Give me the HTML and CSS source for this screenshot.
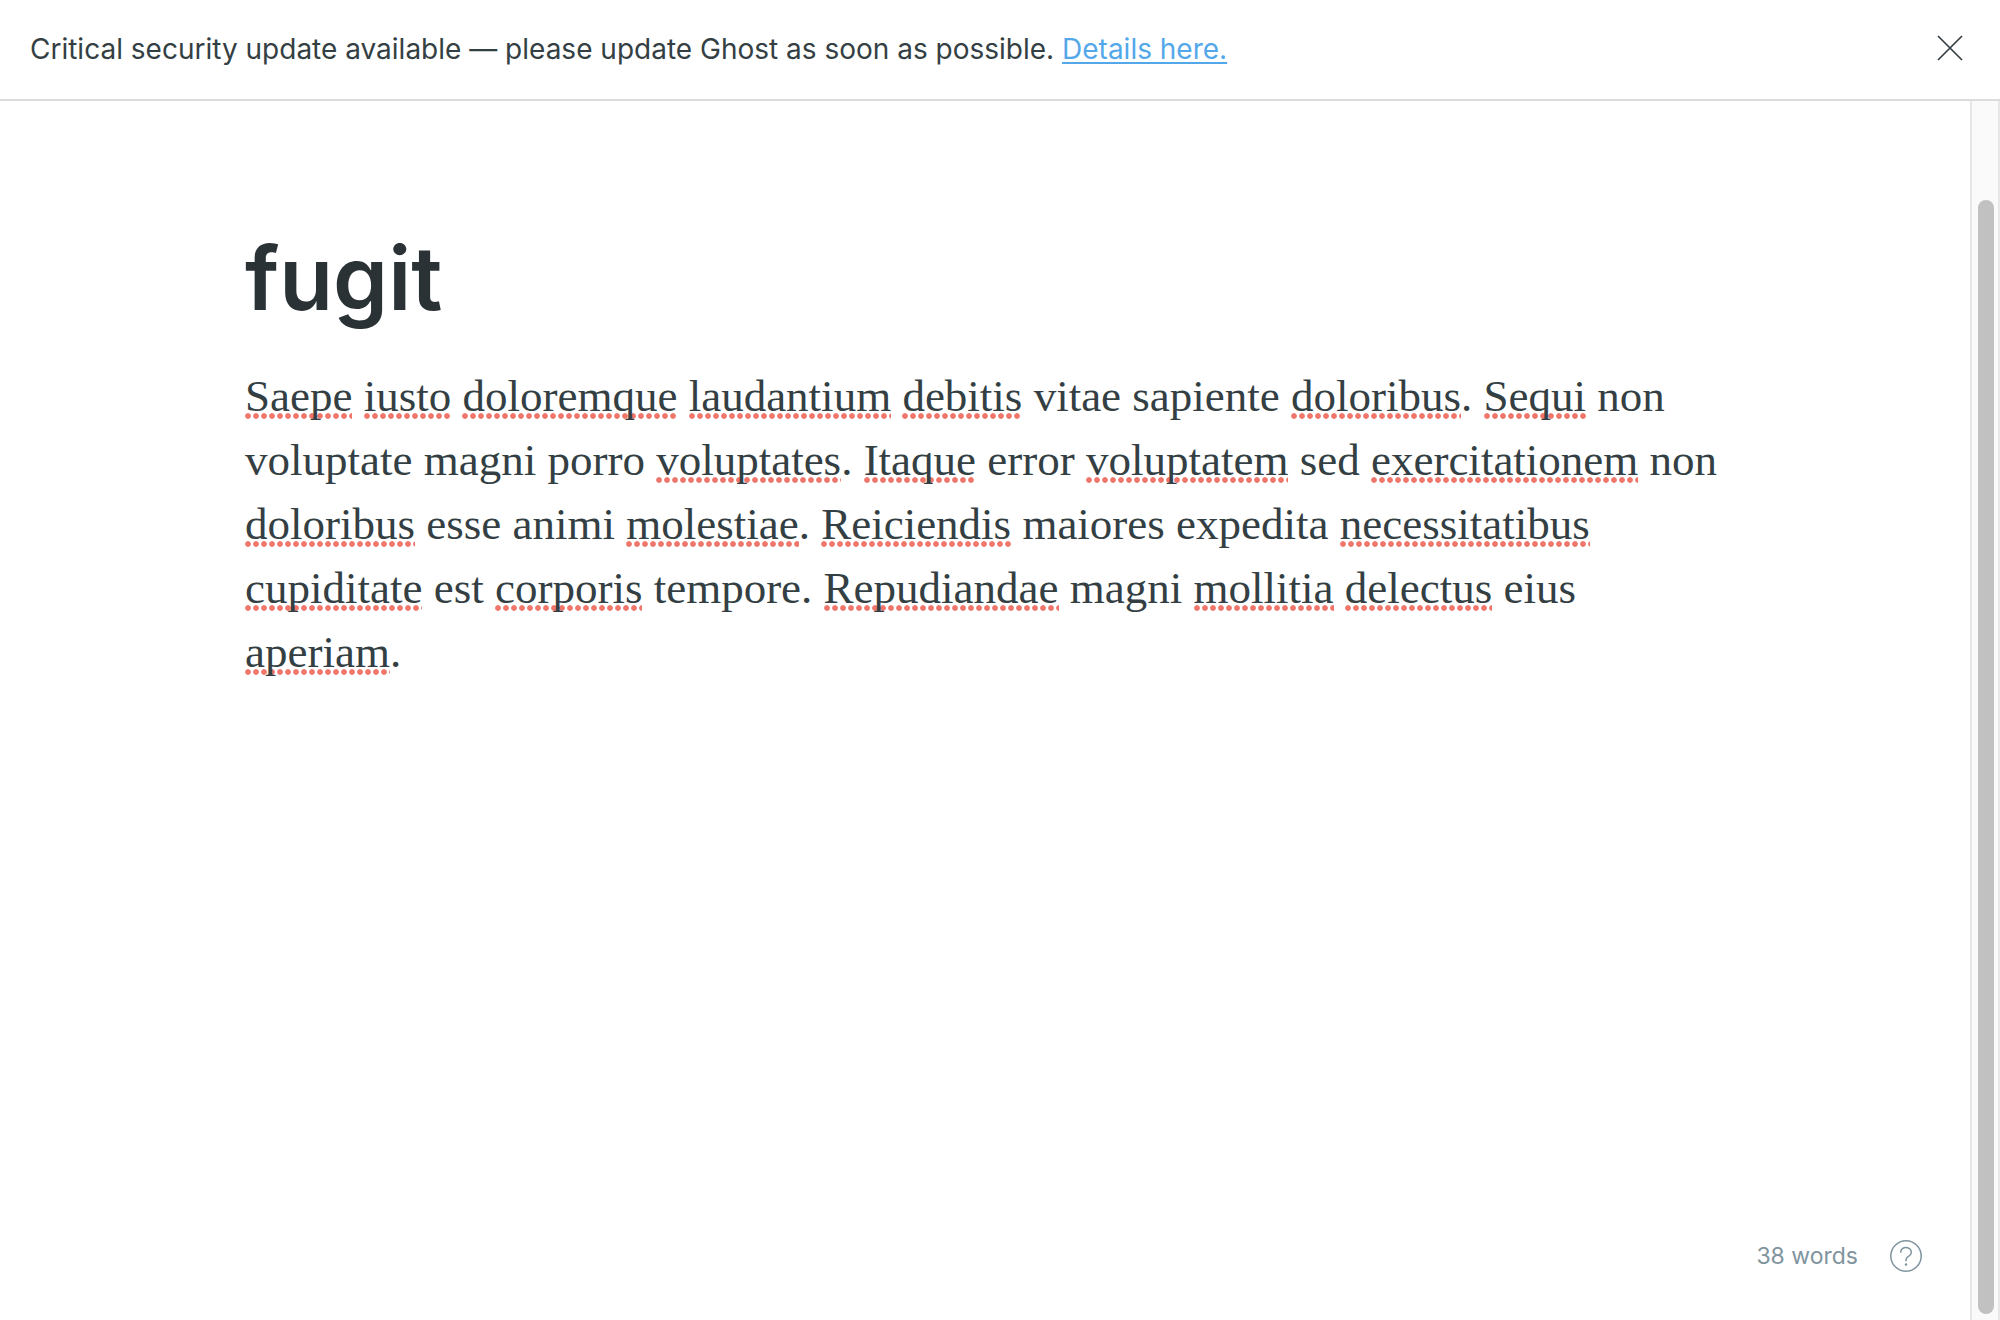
FILE: index.html
```html
<!DOCTYPE html>
<html lang="en">
<head>
<meta charset="utf-8">
<title>fugit</title>
<link rel="stylesheet" href="styles.css">
</head>
<body>
<aside class="alert">
  <p class="alert-text">Critical security update available — please update Ghost as soon as possible. <a class="alert-link" href="#details">Details here.</a></p>
  <button class="icon-button" type="button" aria-label="Close">
    <svg width="26" height="26" viewBox="0 0 26 26" fill="none" stroke="currentColor" stroke-width="1.7"><path d="M1 1l24 24M25 1L1 25"/></svg>
  </button>
</aside>
<div class="workspace">
  <main class="editor">
    <article class="post">
      <h1 class="post-title">fugit</h1>
      <p class="post-body"><span class="misspelt">Saepe</span> <span class="misspelt">iusto</span> <span class="misspelt">doloremque</span> <span class="misspelt">laudantium</span> <span class="misspelt">debitis</span> vitae sapiente <span class="misspelt">doloribus</span>. <span class="misspelt">Sequi</span> non voluptate magni porro <span class="misspelt">voluptates</span>. <span class="misspelt">Itaque</span> error <span class="misspelt">voluptatem</span> sed <span class="misspelt">exercitationem</span> non <span class="misspelt">doloribus</span> esse animi <span class="misspelt">molestiae</span>. <span class="misspelt">Reiciendis</span> maiores expedita <span class="misspelt">necessitatibus</span> <span class="misspelt">cupiditate</span> est <span class="misspelt">corporis</span> tempore. <span class="misspelt">Repudiandae</span> magni <span class="misspelt">mollitia</span> <span class="misspelt">delectus</span> eius <span class="misspelt">aperiam</span>.</p>
    </article>
    <footer class="status">
      <span>38 words</span>
      <a class="help" href="#help" aria-label="Help">
        <svg width="32" height="32" viewBox="0 0 32 32" fill="none" stroke="currentColor" stroke-width="1.5"><circle cx="16" cy="16" r="15.2"/><path d="M10.7 12.8V12a5.3 4.8 0 0 1 10.6 0.5c0 4.3-5.3 3.4-5.3 7.2v1.6"/><circle cx="16" cy="24.5" r="1.2" fill="currentColor" stroke="none"/></svg>
      </a>
    </footer>
  </main>
  <div class="scroll-track"><div class="scroll-thumb"></div></div>
</div>
</body>
</html>
```
FILE: styles.css
```css
* { box-sizing: border-box; }

body {
  margin: 0;
  min-height: 100vh;
  display: flex;
  flex-direction: column;
  background: #fff;
  color: #343f44;
  font-family: Inter, "Liberation Sans", sans-serif;
}

.alert {
  display: flex;
  align-items: flex-start;
  justify-content: space-between;
  padding: 28px 37px 28px 30px;
  border-bottom: 2px solid #dadddc;
}

.alert-text {
  margin: 0;
  font-size: 28px;
  line-height: 43px;
}

.alert-link {
  color: #54a8ea;
  text-decoration-thickness: 2px;
  text-underline-offset: 3px;
  text-decoration-skip-ink: none;
}

.icon-button {
  display: flex;
  padding: 7px 0;
  border: 0;
  background: none;
  color: #343f44;
}

.workspace {
  flex: 1;
  display: flex;
}

.editor {
  flex: 1;
  display: flex;
  flex-direction: column;
  justify-content: space-between;
}

.post {
  width: 100%;
  max-width: 1480px;
  margin: 0 auto;
  padding-top: 121px;
}

.post-title {
  margin: 0;
  color: #2a3236;
  font-size: 88px;
  font-weight: 600;
  line-height: 112px;
}

.post-body {
  margin: 30px 0 0;
  font-family: Georgia, "Liberation Serif", serif;
  font-size: 45px;
  line-height: 64px;
}

.misspelt {
  background: radial-gradient(circle 3px at 3px 3px, #f0756a 80%, transparent 108%) left bottom 2px / 8px 6px repeat-x;
}

.status {
  display: flex;
  align-items: center;
  justify-content: flex-end;
  gap: 32px;
  padding: 0 48px 48px;
  color: #7f949e;
  font-size: 23px;
  line-height: 32px;
}

.help {
  display: flex;
  color: inherit;
}

.scroll-track {
  display: flex;
  width: 30px;
  padding: 99px 4px 6px 6px;
  border: solid #e7e7e7;
  border-width: 0 2px;
  background: #fafafa;
}

.scroll-thumb {
  width: 16px;
  border-radius: 8px;
  background: #c1c1c1;
}
```
